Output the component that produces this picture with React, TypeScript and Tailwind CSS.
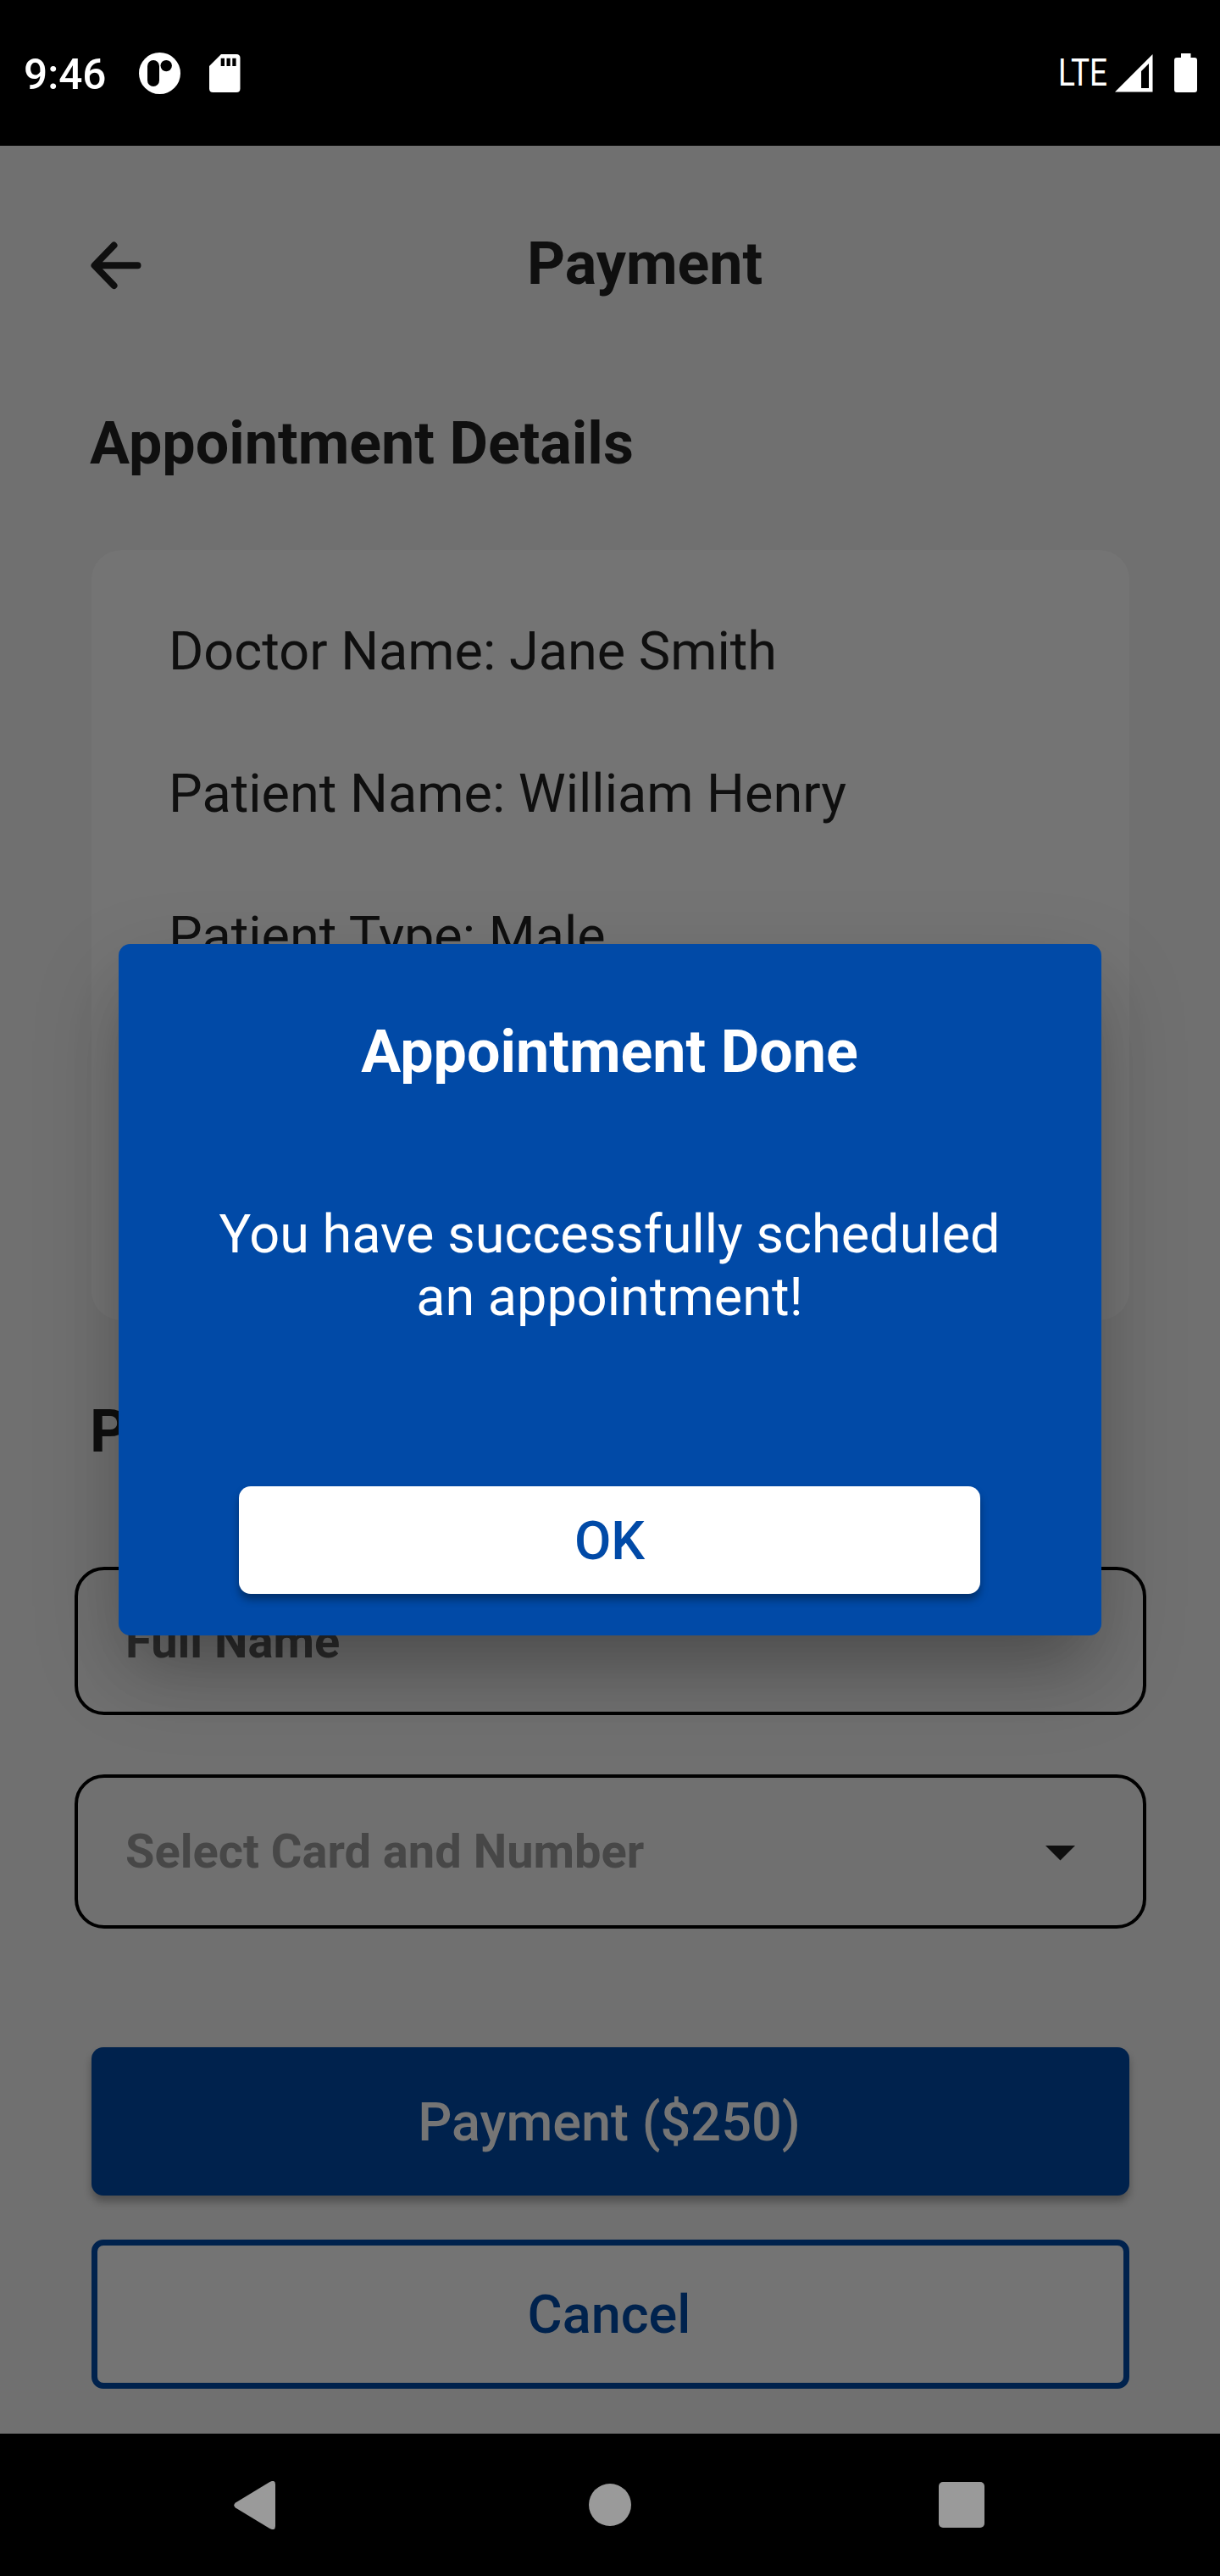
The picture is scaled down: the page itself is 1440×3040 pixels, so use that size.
import React from "react";

const details = [
  "Doctor Name: Jane Smith",
  "Patient Name: William Henry",
  "Patient Type: Male",
];

function StatusBar() {
  return (
    <header className="flex h-[172px] items-center justify-between bg-black pl-[28px] pr-[27px] text-white">
      <div className="flex items-center">
        <span className="mt-[4px] w-[136px] origin-left scale-x-[0.99] whitespace-nowrap text-[50px] leading-[58px] font-medium">9:46</span>
        <svg className="mt-[1px] h-[49px] w-[49px]" viewBox="0 0 49 49">
          <circle cx="24.5" cy="24.5" r="24.5" fill="#fff" />
          <rect x="10" y="9" width="14" height="31" rx="7" />
          <circle cx="32.2" cy="15.6" r="6.7" />
        </svg>
        <svg className="ml-[34px] mt-[1px] h-[45px] w-[37px]" viewBox="0 0 37 45">
          <path
            fill="#fff"
            d="M14 0H32Q36.500 0 36.500 4.500V40.500Q36.500 45 32 45H4.500Q0 45 0 40.500V14Z"
          />
          <path d="M13.700 4.700h4.300v9.300h-4.300zM20.500 4.700h4.300v9.300h-4.300zM27.300 4.700h4.300v9.300h-4.300z" />
        </svg>
      </div>
      <div className="flex items-center">
        <span className="w-[67px] origin-left scale-x-[0.84] whitespace-nowrap text-[44px] leading-[52px]">LTE</span>
        <svg className="h-[45px] w-[45px]" viewBox="0 0 45 45">
          <path
            fill="#fff"
            fillRule="evenodd"
            d="M44.500 0V44.500H0ZM40 11 31 20V40H40Z"
          />
        </svg>
        <svg className="ml-[25px] h-[46px] w-[27px]" viewBox="0 0 27 46">
          <path
            fill="#fff"
            d="M8 0H19.500V5H24Q27 5 27 8V43Q27 46 24 46H3Q0 46 0 43V8Q0 5 3 5H8Z"
          />
        </svg>
      </div>
    </header>
  );
}

function NavigationBar() {
  return (
    <nav className="flex h-[168px] items-center bg-black pl-[276px]">
      <svg className="h-[57px] w-[49px]" viewBox="0 0 49 57">
        <path fill="#9a9a9a" d="M2 25.500 42 1.200Q49-2.500 49 4V53Q49 59.500 42 55.800L2 31.500Q-1.500 28.500 2 25.500Z" />
      </svg>
      <div className="ml-[370px] size-[50px] rounded-full bg-[#9a9a9a]" />
      <div className="ml-[363px] size-[54px] rounded-[5px] bg-[#9a9a9a]" />
    </nav>
  );
}

function AppointmentDialog() {
  return (
    <div className="absolute inset-x-[140px] top-[1114px] flex h-[816px] flex-col items-center rounded-[14px] bg-[#014aa7] pt-[86px] pr-[1px] text-white shadow-[0_50px_70px_-20px_rgba(0,0,0,0.2),0_40px_110px_0_rgba(0,0,0,0.16)]">
      <h2 className="text-[70px] leading-[82px] font-bold">Appointment Done</h2>
      <p className="mt-[138px] text-center text-[63px] leading-[74px]">
        You have successfully scheduled
        <br />
        an appointment!
      </p>
      <button className="mt-[186px] h-[127px] w-[875px] rounded-[14px] bg-white pt-[2px] text-[63px] leading-[74px] font-medium text-[#014aa7] shadow-[0_7px_10px_rgba(0,0,0,0.35)]">
        OK
      </button>
    </div>
  );
}

export default function App() {
  return (
    <div className="relative flex h-[3040px] w-[1440px] flex-col overflow-hidden bg-[#707070] font-['Roboto',sans-serif] text-[#0f0f0f]">
      <StatusBar />
      <main className="flex flex-1 flex-col px-[108px]">
        <div className="flex pt-[98px]">
          <svg className="mt-[15px] -ml-[1px] h-[57px] w-[60px]" viewBox="0 0 60 57">
            <path
              d="M27.500 4.500 4.500 28.200 27.500 52M5 28.200H55.500"
              fill="none"
              stroke="#0f0f0f"
              strokeWidth="8"
              strokeLinecap="round"
              strokeLinejoin="round"
            />
          </svg>
          <h1 className="ml-[455px] text-[70px] leading-[82px] font-bold">Payment</h1>
        </div>
        <h2 className="mt-[130px] -ml-[2px] text-[70px] leading-[82px] font-bold">Appointment Details</h2>
        <section className="mt-[85px] flex h-[909px] w-[1225px] flex-col gap-[94px] rounded-[35px] bg-[#747474] pt-[83px] pl-[91px]">
          {details.map((line) => (
            <p key={line} className="text-[63px] leading-[74px]">
              {line}
            </p>
          ))}
        </section>
        <h2 className="mt-[90px] -ml-[2px] text-[70px] leading-[82px] font-bold">Payment Details</h2>
        <div className="-mr-[21px] -ml-[20px] mt-[119px] flex h-[175px] items-center rounded-[35px] border-4 border-black pl-[56px] text-[56px] leading-[66px] font-bold text-[#2b2b2b]">
          Full Name
        </div>
        <div className="-mr-[21px] -ml-[20px] mt-[70px] flex h-[182px] items-center justify-between rounded-[35px] border-4 border-black pl-[56px] pr-[80px] text-[56px] leading-[66px] font-bold text-[#474747]">
          Select Card and Number
          <svg className="mt-[3px] h-[18px] w-[35px]" viewBox="0 0 35 18">
            <path d="M0 0H35L17.500 17.500Z" fill="#0f0f0f" />
          </svg>
        </div>
        <button className="mt-[140px] h-[175px] w-[1225px] rounded-[14px] bg-[#00224d] pt-[2px] pr-[3px] text-[63px] leading-[74px] font-medium text-[#757575] shadow-[0_7px_10px_rgba(0,0,0,0.3)]">
          Payment ($250)
        </button>
        <button className="mt-[52px] h-[176px] w-[1225px] rounded-[14px] border-[7px] border-[#00224d] bg-[#747474] pt-[2px] pr-[3px] text-[63px] leading-[74px] font-medium text-[#00224d]">
          Cancel
        </button>
      </main>
      <NavigationBar />
      <AppointmentDialog />
    </div>
  );
}
